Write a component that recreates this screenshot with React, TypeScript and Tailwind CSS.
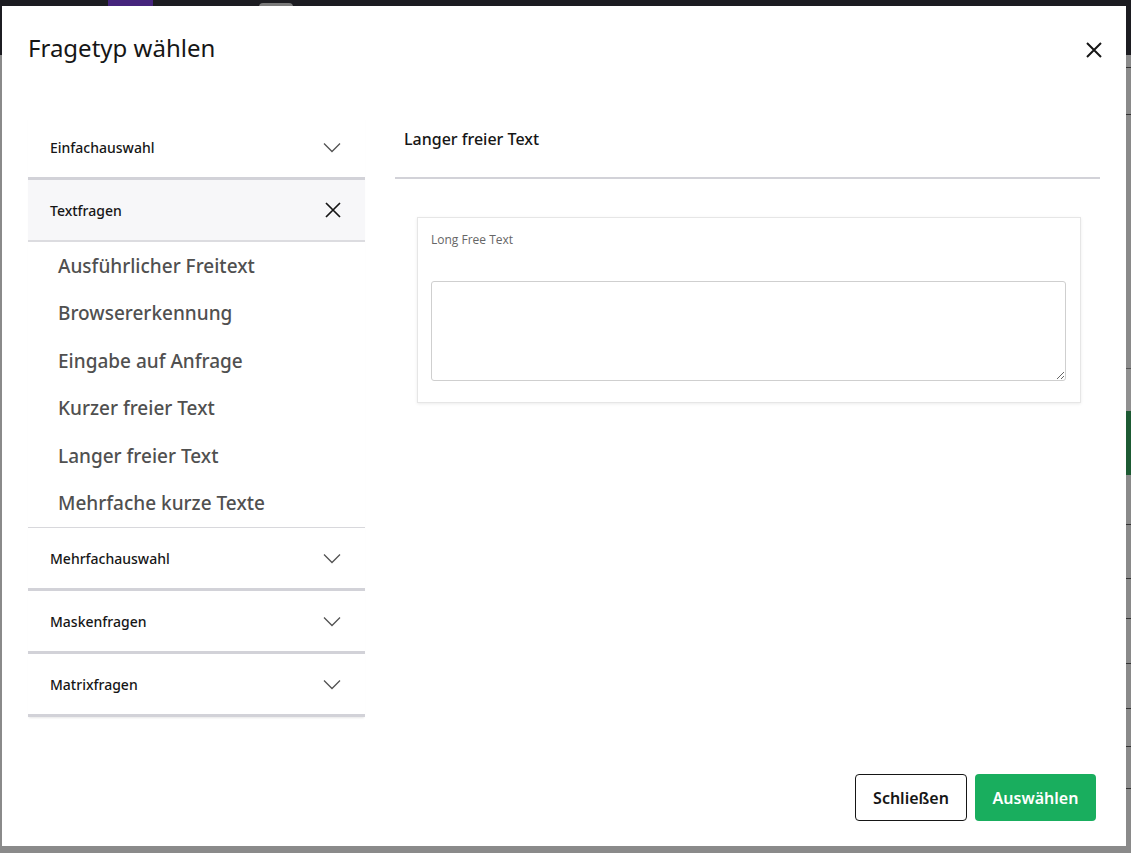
import React from 'react';

const groups = [
  { name: 'Einfachauswahl', open: false },
  { name: 'Textfragen', open: true },
  { name: 'Mehrfachauswahl', open: false },
  { name: 'Maskenfragen', open: false },
  { name: 'Matrixfragen', open: false },
];

const textTypes = [
  'Ausführlicher Freitext',
  'Browsererkennung',
  'Eingabe auf Anfrage',
  'Kurzer freier Text',
  'Langer freier Text',
  'Mehrfache kurze Texte',
];

function Chevron() {
  return (
    <svg width="18" height="11" viewBox="0 0 18 11" fill="none">
      <path d="M1 1.5 L9 9.5 L17 1.5" stroke="#525252" strokeWidth="1.3" />
    </svg>
  );
}

function CloseIcon({ size = 16, stroke = 1.6 }: { size?: number; stroke?: number }) {
  return (
    <svg width={size} height={size} viewBox="0 0 16 16" fill="none">
      <path d="M1 1 L15 15 M15 1 L1 15" stroke="#161616" strokeWidth={stroke} />
    </svg>
  );
}

export default function App() {
  return (
    <div
      className="relative w-[1131px] h-[853px] overflow-hidden bg-[#8a8a8a]"
      style={{ fontFamily: '"Noto Sans", sans-serif' }}
    >
      {/* page behind the overlay */}
      <div className="h-[55px] bg-[#1c1c21] flex">
        <div className="ml-[108px] w-[45px] h-[6px] bg-[#45247c]"></div>
        <div className="ml-[106px] mt-[3px] w-[34px] h-[4px] rounded-t bg-[#7a7a7a]"></div>
      </div>
      <div className="flex justify-end">
        <div className="w-[6px] flex flex-col">
          <div className="h-[13px] border-b border-[#333]"></div>
          <div className="h-[47px] border-b border-[#333]"></div>
          <div className="h-[254px] border-b border-[#555]"></div>
          <div className="h-[42px] bg-[#909090]"></div>
          <div className="h-[64px] bg-[#1d5a33]"></div>
          <div className="h-[50px] border-b border-[#333]"></div>
          <div className="h-[54px] border-b border-[#333]"></div>
          <div className="h-[40px] border-b border-[#333]"></div>
          <div className="h-[45px] border-b border-[#333]"></div>
          <div className="h-[45px] border-b border-[#333]"></div>
          <div className="h-[38px] border-b border-[#333]"></div>
          <div className="h-[42px] border-b border-[#333]"></div>
        </div>
      </div>

      {/* dialog */}
      <div className="absolute left-[2px] top-[6px] w-[1124px] h-[840px] bg-white flex flex-col">
        <div className="h-[84px] flex items-center justify-between pl-[26px] pr-[24px]">
          <h2 className="text-[24px] text-[#161616] leading-none">Fragetyp wählen</h2>
          <button className="mt-[4px]">
            <CloseIcon size={16} stroke={2} />
          </button>
        </div>

        <div className="flex-1 grid grid-cols-[337px_1fr] gap-[30px] px-[26px] pt-[27px]">
          {/* left: accordion */}
          <div className="self-start shadow-[0_2px_2px_-1px_rgba(0,0,0,0.1)]">
            {groups.map((g) => (
              <div key={g.name}>
                <div
                  className={`flex items-center justify-between pl-[22px] pr-[24px] ${
                    g.open
                      ? 'h-[62px] bg-[#f7f7f9] border-b-2 border-[#dcdce0]'
                      : 'h-[63px] border-b-[3px] border-[#d2d2d8]'
                  }`}
                >
                  <span className="text-[14px] font-medium text-[#161616]">{g.name}</span>
                  {g.open ? <CloseIcon size={16} stroke={1.7} /> : <Chevron />}
                </div>
                {g.open && (
                  <div className="border-b border-[#d8d8dc]">
                    {textTypes.map((t) => (
                      <div
                        key={t}
                        className="h-[47.5px] flex items-center pl-[30px] text-[19px] font-medium text-[#505050]"
                      >
                        {t}
                      </div>
                    ))}
                  </div>
                )}
              </div>
            ))}
          </div>

          {/* right: preview */}
          <div>
            <div className="h-[62px] border-b-2 border-[#d2d2d8] pl-[9px] pt-[10px]">
              <span className="text-[16px] font-medium text-[#161616]">Langer freier Text</span>
            </div>
            <div
              className="mt-[38px] ml-[22px] mr-[19px] border border-[#e6e6e6] shadow-[0_1px_3px_rgba(0,0,0,0.08)] pl-[13px] pr-[14px] pt-[14px] pb-[21px]"
              style={{ fontFamily: '"Open Sans", sans-serif' }}
            >
              <div className="text-[12px] leading-[16px] text-[#666]">Long Free Text</div>
              <textarea className="mt-[33px] block w-full h-[100px] border border-[#cfcfcf] rounded-[3px] resize-y"></textarea>
            </div>
          </div>
        </div>

        <div className="flex justify-end gap-[8px] pr-[30px] pb-[25px]">
          <button className="h-[47px] w-[112px] rounded-[4px] border border-[#161616] text-[16px] font-semibold text-[#161616]">
            Schließen
          </button>
          <button className="h-[47px] w-[121px] rounded-[4px] bg-[#19ae5e] text-[16px] font-semibold text-white">
            Auswählen
          </button>
        </div>
      </div>
    </div>
  );
}
